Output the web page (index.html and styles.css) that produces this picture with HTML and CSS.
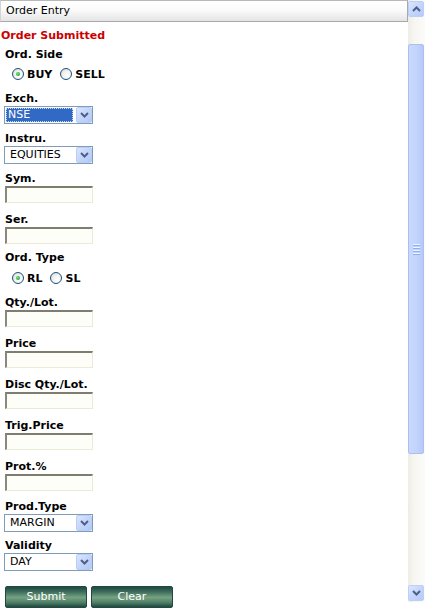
FILE: index.html
```html
<!DOCTYPE html>
<html>
<head>
<meta charset="utf-8">
<title>Order Entry</title>
<link rel="stylesheet" href="styles.css">
</head>
<body>
<div class="frame">
  <div class="content">
    <div class="header">Order Entry</div>
    <div class="status">Order Submitted</div>

    <div class="field f-side">
      <div class="lbl">Ord. Side</div>
      <div class="radios">
        <label class="radio"><span class="dot on"></span><span class="rtext">BUY</span></label>
        <label class="radio"><span class="dot"></span><span class="rtext">SELL</span></label>
      </div>
    </div>

    <div class="field f-sel">
      <div class="lbl">Exch.</div>
      <div class="select"><span class="val focus"><span class="hl">NSE</span></span><span class="dd"><svg width="9" height="6" viewBox="0 0 9 6"><path d="M1 1 L4.5 4.5 L8 1" fill="none" stroke="#4d6185" stroke-width="2"/></svg></span></div>
    </div>

    <div class="field f-sel">
      <div class="lbl">Instru.</div>
      <div class="select"><span class="val">EQUITIES</span><span class="dd"><svg width="9" height="6" viewBox="0 0 9 6"><path d="M1 1 L4.5 4.5 L8 1" fill="none" stroke="#4d6185" stroke-width="2"/></svg></span></div>
    </div>

    <div class="field f-sel">
      <div class="lbl">Sym.</div>
      <div class="text"></div>
    </div>

    <div class="field">
      <div class="lbl">Ser.</div>
      <div class="text"></div>
    </div>

    <div class="field f-type">
      <div class="lbl">Ord. Type</div>
      <div class="radios r2">
        <label class="radio"><span class="dot on"></span><span class="rtext">RL</span></label>
        <label class="radio"><span class="dot"></span><span class="rtext">SL</span></label>
      </div>
    </div>

    <div class="field f-sel">
      <div class="lbl">Qty./Lot.</div>
      <div class="text"></div>
    </div>

    <div class="field">
      <div class="lbl">Price</div>
      <div class="text"></div>
    </div>

    <div class="field">
      <div class="lbl">Disc Qty./Lot.</div>
      <div class="text"></div>
    </div>

    <div class="field">
      <div class="lbl">Trig.Price</div>
      <div class="text"></div>
    </div>

    <div class="field">
      <div class="lbl">Prot.%</div>
      <div class="text"></div>
    </div>

    <div class="field f-prod">
      <div class="lbl">Prod.Type</div>
      <div class="select"><span class="val">MARGIN</span><span class="dd"><svg width="9" height="6" viewBox="0 0 9 6"><path d="M1 1 L4.5 4.5 L8 1" fill="none" stroke="#4d6185" stroke-width="2"/></svg></span></div>
    </div>

    <div class="field f-val">
      <div class="lbl">Validity</div>
      <div class="select"><span class="val">DAY</span><span class="dd"><svg width="9" height="6" viewBox="0 0 9 6"><path d="M1 1 L4.5 4.5 L8 1" fill="none" stroke="#4d6185" stroke-width="2"/></svg></span></div>
    </div>

    <div class="buttons">
      <button class="btn">Submit</button>
      <button class="btn">Clear</button>
    </div>
  </div>

  <div class="scrollbar">
    <div class="sbtn"><svg width="9" height="6" viewBox="0 0 9 6"><path d="M1 5 L4.5 1.5 L8 5" fill="none" stroke="#4d6185" stroke-width="2"/></svg></div>
    <div class="thumb"><div class="grip"><i></i><i></i><i></i><i></i></div></div>
    <div class="track"></div>
    <div class="sbtn"><svg width="9" height="6" viewBox="0 0 9 6"><path d="M1 1 L4.5 4.5 L8 1" fill="none" stroke="#4d6185" stroke-width="2"/></svg></div>
  </div>
</div>
</body>
</html>
```

FILE: styles.css
```css
html, body {
  margin: 0;
  padding: 0;
  background: #ffffff;
  overflow: hidden;
}
body {
  font-family: "DejaVu Sans", Verdana, sans-serif;
  color: #000;
}
.frame {
  display: flex;
  align-items: flex-start;
  width: 425px;
}
.content {
  flex: 1;
  min-width: 0;
}
.header {
  height: 20px;
  line-height: 20px;
  border: 1px solid #a9a9a9;
  border-top-color: #b9b9b9;
  border-left-color: #d4d4d4;
  background: linear-gradient(#ffffff 0%, #fbfbfb 45%, #e4e4e4 100%);
  font-size: 11px;
  padding-left: 5px;
}
.status {
  margin-top: 7px;
  padding-left: 1px;
  height: 14px;
  line-height: 14px;
  font-size: 11px;
  font-weight: bold;
  color: #cc0000;
}
.field {
  margin-top: 9px;
  padding-left: 5px;
}
.f-side { margin-top: 4px; }
.f-sel { margin-top: 7px; }
.f-type { margin-top: 6px; }
.f-prod { margin-top: 8px; }
.f-val { margin-top: 6px; }
.lbl {
  height: 14px;
  padding-top: 1px;
  line-height: 14px;
  font-size: 11px;
  font-weight: bold;
  white-space: nowrap;
}
.radios {
  display: flex;
  align-items: center;
  height: 20px;
  margin-top: 2px;
  padding-left: 7px;
}
.radios.r2 { margin-top: 3px; }
.radio {
  display: flex;
  align-items: center;
  margin-right: 8px;
}
.dot {
  box-sizing: border-box;
  width: 12px;
  height: 12px;
  border-radius: 50%;
  border: 1px solid #1c5180;
  background: radial-gradient(circle at 65% 65%, #ffffff 0%, #f4f4f1 40%, #d6d6cf 100%);
  display: flex;
  align-items: center;
  justify-content: center;
}
.dot.on::after {
  content: "";
  width: 4px;
  height: 4px;
  border-radius: 50%;
  background: radial-gradient(circle at 40% 40%, #7de27d 0%, #21a121 80%);
}
.rtext {
  margin-left: 3px;
  font-size: 11px;
  font-weight: bold;
}
.select {
  box-sizing: border-box;
  margin-left: -1px;
  width: 89px;
  height: 18px;
  border: 1px solid #7f9db9;
  background: #fff;
  display: flex;
  align-items: stretch;
}
.val {
  flex: 1;
  margin: 1px 3px 1px 1px;
  padding-left: 4px;
  font-size: 11px;
  line-height: 14px;
}
.val.focus {
  padding-left: 0;
  background: #316ac5;
  outline: 1px dotted #d0d8e8;
  outline-offset: -1px;
  color: #fff;
}
.val.focus .hl {
  padding-left: 2px;
}
.dd {
  box-sizing: border-box;
  width: 16px;
  border: 1px solid #b9cdf8;
  border-radius: 2px;
  background: linear-gradient(135deg, #dbe6fe 0%, #c4d5fc 50%, #b3c8f6 100%);
  display: flex;
  align-items: center;
  justify-content: center;
}
.text {
  box-sizing: border-box;
  width: 88px;
  height: 17px;
  border-top: 2px solid #7f7d70;
  border-left: 2px solid #8a887c;
  border-right: 1px solid #ece9d8;
  border-bottom: 1px solid #ece9d8;
  background: #fefef8;
}
.buttons {
  display: flex;
  gap: 4px;
  margin-top: 15px;
  padding-left: 5px;
}
.btn {
  box-sizing: border-box;
  width: 82px;
  height: 22px;
  padding: 0;
  border: 1px solid #24483f;
  border-radius: 2px;
  background: linear-gradient(#1c4a42 0%, #3f6e5e 25%, #76a282 52%, #4e7e67 78%, #1d4940 100%);
  color: #fff;
  font-family: "DejaVu Sans", Verdana, sans-serif;
  font-size: 11px;
  line-height: 20px;
}
.scrollbar {
  flex: none;
  width: 17px;
  height: 602px;
  box-sizing: border-box;
  padding: 1px 1px 1px 0;
  background: linear-gradient(to right, #eeede5 0%, #f7f6f1 40%, #fbfbf9 100%);
  display: flex;
  flex-direction: column;
}
.sbtn {
  box-sizing: border-box;
  width: 16px;
  height: 16px;
  border: 1px solid #bccffa;
  border-radius: 2px;
  background: linear-gradient(135deg, #dde7fe 0%, #c6d7fd 45%, #b5c9f7 100%);
  display: flex;
  align-items: center;
  justify-content: center;
}
.thumb {
  box-sizing: border-box;
  margin-top: 27px;
  width: 16px;
  height: 410px;
  border: 1px solid #a9c0f4;
  border-radius: 2px;
  background: linear-gradient(to right, #c9d8fd 0%, #c3d4fd 50%, #b6c9f8 100%);
  display: flex;
  align-items: center;
  justify-content: center;
}
.grip {
  display: flex;
  flex-direction: column;
  gap: 1px;
}
.grip i {
  display: block;
  width: 7px;
  height: 1px;
  background: #eef3fe;
  border-bottom: 1px solid #8caef4;
}
.track {
  flex: 1;
}
```
